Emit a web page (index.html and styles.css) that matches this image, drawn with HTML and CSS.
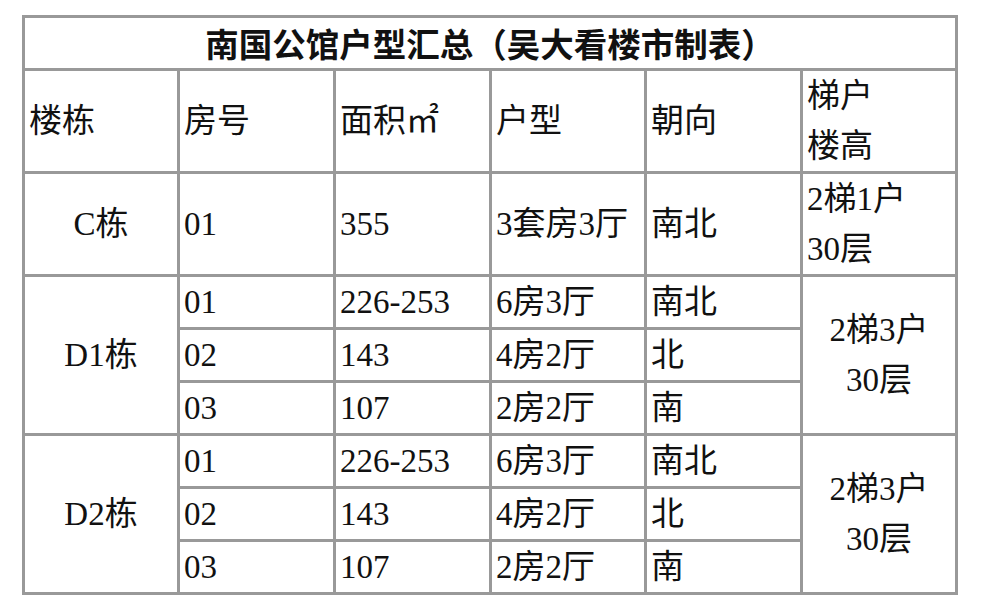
FILE: index.html
```html
<!DOCTYPE html>
<html lang="zh-CN">
<head>
<meta charset="utf-8">
<title>南国公馆户型汇总</title>
<link rel="stylesheet" href="styles.css">
</head>
<body>
<table class="sheet">
  <colgroup>
    <col class="c1"><col class="c2"><col class="c3"><col class="c4"><col class="c5"><col class="c6">
  </colgroup>
  <tr class="r-title">
    <td class="title" colspan="6">南国公馆户型汇总（吴大看楼市制表）</td>
  </tr>
  <tr class="r-big">
    <td>楼栋</td>
    <td>房号</td>
    <td>面积㎡</td>
    <td>户型</td>
    <td>朝向</td>
    <td>梯户<br>楼高</td>
  </tr>
  <tr class="r-big">
    <td class="center">C栋</td>
    <td>01</td>
    <td>355</td>
    <td>3套房3厅</td>
    <td>南北</td>
    <td>2梯1户<br>30层</td>
  </tr>
  <tr class="r-sub">
    <td class="center" rowspan="3">D1栋</td>
    <td>01</td>
    <td>226-253</td>
    <td>6房3厅</td>
    <td>南北</td>
    <td class="center" rowspan="3">2梯3户<br>30层</td>
  </tr>
  <tr class="r-sub">
    <td>02</td>
    <td>143</td>
    <td>4房2厅</td>
    <td>北</td>
  </tr>
  <tr class="r-sub">
    <td>03</td>
    <td>107</td>
    <td>2房2厅</td>
    <td>南</td>
  </tr>
  <tr class="r-sub">
    <td class="center" rowspan="3">D2栋</td>
    <td>01</td>
    <td>226-253</td>
    <td>6房3厅</td>
    <td>南北</td>
    <td class="center" rowspan="3">2梯3户<br>30层</td>
  </tr>
  <tr class="r-sub">
    <td>02</td>
    <td>143</td>
    <td>4房2厅</td>
    <td>北</td>
  </tr>
  <tr class="r-sub">
    <td>03</td>
    <td>107</td>
    <td>2房2厅</td>
    <td>南</td>
  </tr>
</table>
</body>
</html>
```

FILE: styles.css
```css
html, body {
  margin: 0;
  padding: 0;
  background: #ffffff;
}

body {
  padding: 15px 0 0 22px;
  font-family: "Liberation Serif", "Noto Sans CJK SC", serif;
  color: #111111;
}

.sheet {
  border-collapse: separate;
  border-spacing: 0;
  table-layout: fixed;
  width: 936px;
  border-top: 3px solid #999999;
  border-left: 3px solid #999999;
}

.c1 { width: 155px; }
.c2 { width: 156px; }
.c3 { width: 156px; }
.c4 { width: 155px; }
.c5 { width: 156px; }
.c6 { width: 155px; }

.sheet td {
  border-right: 3px solid #999999;
  border-bottom: 3px solid #999999;
  padding: 0 0 0 4px;
  font-size: 33px;
  line-height: 50px;
  text-align: left;
  vertical-align: middle;
  white-space: nowrap;
}

.r-title { height: 53px; }
.r-big { height: 103px; }
.r-sub { height: 53px; }

.sheet td.title {
  font-family: "Noto Sans CJK SC", sans-serif;
  font-weight: bold;
  font-size: 33.5px;
  text-align: center;
  padding: 0;
}

.sheet td.center {
  text-align: center;
  padding: 0;
}
```
